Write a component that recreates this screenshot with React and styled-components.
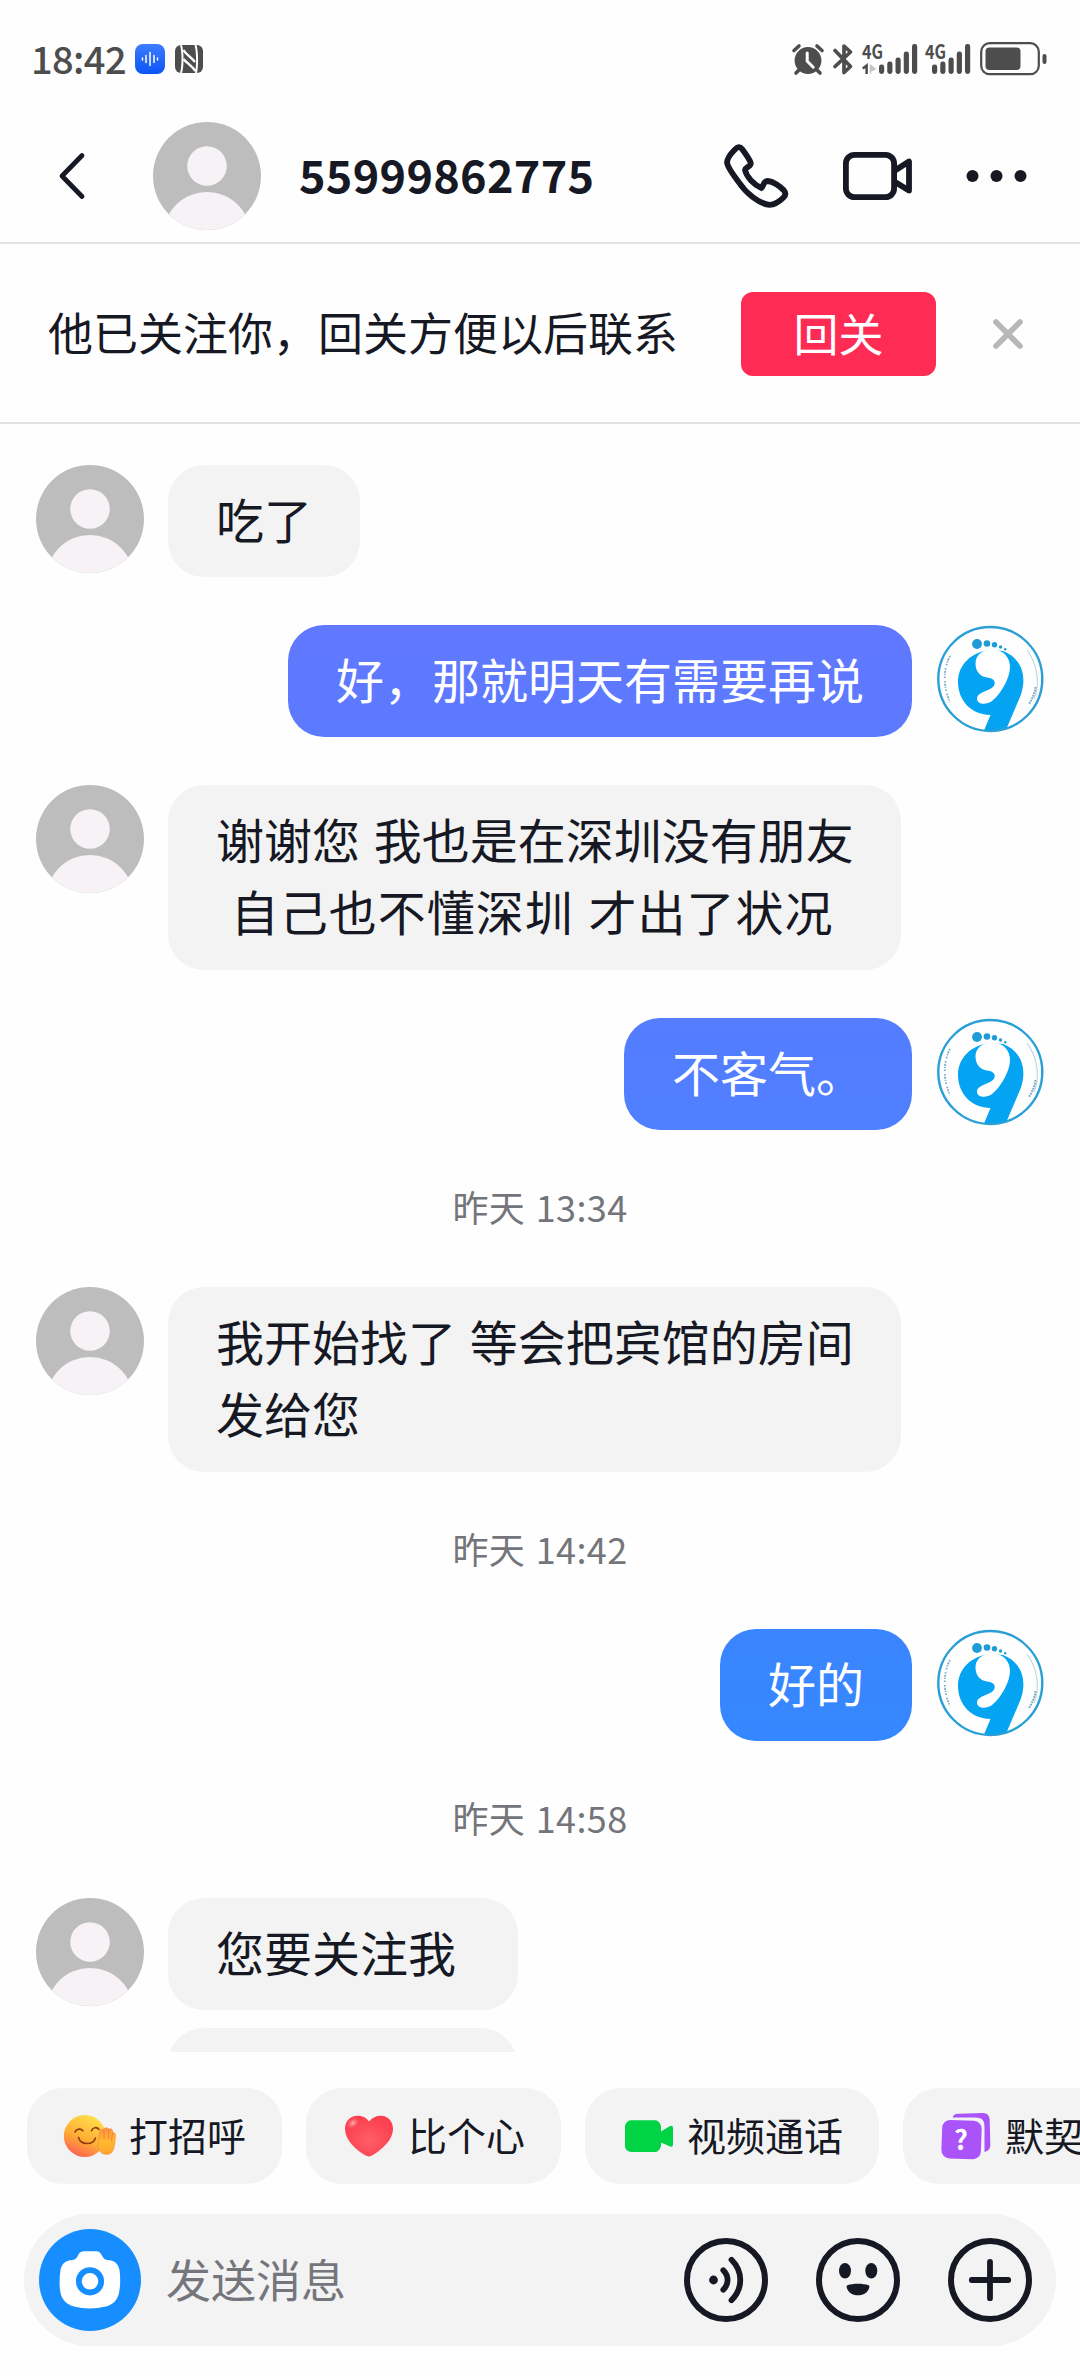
import React from "react";
import styled, { createGlobalStyle } from "styled-components";

const INK = "#161823";
const STATUS = "#4d4d4d";

const GlobalStyle = createGlobalStyle`
  html, body { margin: 0; padding: 0; background: #fefefe; }
  body { overflow: hidden; }
  * { box-sizing: border-box; }
`;

const Screen = styled.main`
  display: flex;
  flex-direction: column;
  width: 1080px;
  height: 2376px;
  overflow: hidden;
  background: #fefefe;
  color: ${INK};
  font-family: "Noto Sans CJK SC", "Noto Sans", sans-serif;
  svg { display: block; flex: none; overflow: visible; }
`;

/* ---------- status bar ---------- */
const StatusBar = styled.div`
  display: flex;
  align-items: center;
  height: 110px;
  padding: 8px 33px 0 31px;
  color: ${STATUS};
`;
const Clock = styled.span`
  width: 104px;
  padding-bottom: 2px;
  font-size: 38px;
  font-weight: 500;
  line-height: 40px;
  letter-spacing: -0.6px;
  white-space: nowrap;
`;
const StatusLeft = styled.div`
  display: flex;
  align-items: center;
  gap: 10px;
  margin-top: -1px;
`;
const StatusRight = styled.div`
  display: flex;
  align-items: center;
  gap: 8.7px;
  margin-left: auto;
`;

/* ---------- header ---------- */
const Header = styled.header`
  display: flex;
  align-items: center;
  height: 134px;
  border-bottom: 2px solid #e2e2e3;
  padding: 0 53px 0 57px;
`;
const HeaderAvatar = styled.div`
  margin: 0 38px 0 66px;
`;
const Title = styled.h1`
  margin: 0;
  flex: 1;
  padding-bottom: 4px;
  font-size: 45px;
  line-height: 60px;
  font-weight: 700;
  letter-spacing: 0.3px;
`;
const HeaderActions = styled.div`
  display: flex;
  align-items: center;
  gap: 53.5px;
`;

/* ---------- follow bar ---------- */
const FollowBar = styled.section`
  display: flex;
  align-items: center;
  height: 180px;
  border-bottom: 2px solid #e2e2e3;
  padding: 2px 55px 0 48px;
`;
const FollowText = styled.p`
  margin: 0;
  flex: 1;
  padding-bottom: 4px;
  font-size: 45px;
  line-height: 60px;
  white-space: nowrap;
`;
const FollowButton = styled.button`
  width: 195px;
  height: 84px;
  margin: 0 55px 0 0;
  padding: 0 0 4px;
  border: 0;
  border-radius: 12px;
  background: #fe2c55;
  color: #fff;
  font: inherit;
  font-size: 45px;
`;

/* ---------- messages ---------- */
const Thread = styled.section`
  display: flex;
  flex-direction: column;
  height: 1628px;
  padding: 41px 36px 0;
  overflow: hidden;
`;
const Row = styled.div`
  display: flex;
  flex: none;
  flex-direction: ${(p) => (p.$mine ? "row-reverse" : "row")};
  align-items: flex-start;
  gap: 24px;
  padding-left: ${(p) => (p.$follow ? "132px" : "0")};
  margin-bottom: ${(p) => p.$after ?? 48}px;
`;
const Bubble = styled.div`
  min-height: ${(p) => (p.$wide ? "185px" : "112px")};
  padding: 17px 48px 20px;
  border-radius: 36px;
  background: ${(p) => p.$fill || "#f3f3f4"};
  color: ${(p) => (p.$fill ? "#fff" : INK)};
  font-size: 48px;
  line-height: 72px;
  word-spacing: 3px;
  white-space: pre;
  ${(p) => (p.$wide ? "width: 733px;" : "")}
`;
const Line = styled.div`
  letter-spacing: ${(p) => p.$track || 0}px;
`;
const Stamp = styled.time`
  flex: none;
  height: 157px;
  line-height: 153px;
  text-align: center;
  font-size: 36px;
  letter-spacing: 0.4px;
  word-spacing: 2px;
  color: #74757b;
`;

/* ---------- quick actions ---------- */
const Chips = styled.nav`
  display: flex;
  gap: 24px;
  margin-top: 36px;
  padding-left: 27px;
`;
const Chip = styled.div`
  display: flex;
  flex: none;
  align-items: center;
  gap: 12px;
  height: 96px;
  padding: 0 36px;
  border-radius: 36px;
  background: #f3f3f4;
  font-size: 39px;
  line-height: 58px;
  white-space: nowrap;
`;
const ChipLabel = styled.span`
  padding-bottom: 5px;
`;

/* ---------- composer ---------- */
const Composer = styled.footer`
  display: flex;
  align-items: center;
  width: 1032px;
  height: 132px;
  margin: 30px 0 0 24px;
  padding: 0 24px 0 15px;
  border-radius: 66px;
  background: #f3f3f4;
`;
const Placeholder = styled.span`
  flex: 1;
  padding: 0 0 3px 25px;
  font-size: 45px;
  line-height: 60px;
  color: #75767c;
`;
const ComposerTools = styled.div`
  display: flex;
  gap: 48px;
`;

/* ---------- drawings ---------- */
const VoiceAppIcon = () => (
  <svg width="30" height="30" viewBox="0 0 30 30">
    <defs>
      <linearGradient id="voiceApp" x1="0" y1="0" x2="0" y2="1">
        <stop offset="0" stopColor="#3f7dff" />
        <stop offset="1" stopColor="#0a55f5" />
      </linearGradient>
    </defs>
    <rect width="30" height="30" rx="8" fill="url(#voiceApp)" />
    <path d="M7.5 14v2M11 11.5v7M15 8.5v13M19 11.5v7M22.5 14v2" stroke="#fff" strokeWidth="1.5" strokeLinecap="round" />
  </svg>
);

const NfcIcon = () => (
  <svg width="28" height="28" viewBox="0 0 28 28">
    <rect width="28" height="28" rx="6" fill={STATUS} />
    <path d="M6 0C8 7 8 21 6 28M20.500 0C22.500 7 22.500 21 21 28" stroke="#fefefe" strokeWidth="2" fill="none" />
    <path d="M8.500 5C11 9.500 16 12 20 17M8.500 14C11 17.500 16 20 20.500 26" stroke="#fefefe" strokeWidth="2.400" fill="none" />
  </svg>
);

const AlarmIcon = () => (
  <svg width="32" height="32" viewBox="0 0 32 32">
    <circle cx="16" cy="17.5" r="13.4" fill={STATUS} />
    <path d="M2 7.5 7 3M30 7.5 25 3M7 27l-3 3M25 27l3 3" stroke={STATUS} strokeWidth="3.6" strokeLinecap="round" />
    <path d="M15.2 10v8.2l6 6" stroke="#fefefe" strokeWidth="3" fill="none" strokeLinecap="round" />
  </svg>
);

const BluetoothIcon = () => (
  <svg width="20" height="32" viewBox="0 0 20 32">
    <path d="M2 7.5 17.5 23.5 11 29.5V3L17.5 9 2 23.5" stroke={STATUS} strokeWidth="3.7" fill="none" strokeLinecap="round" strokeLinejoin="round" />
  </svg>
);

const BARS = [9.5, 12.5, 16.5, 22.5, 30];
const SignalIcon = ({ width, first, slot }) => (
  <svg width={width} height="32" viewBox={`0 0 ${width} 32`}>
    <text x="0" y="15.500" textLength="21" lengthAdjust="spacingAndGlyphs" fontFamily="Noto Sans CJK SC, sans-serif" fontSize="19.500" fontWeight="700" fill={STATUS}>4G</text>
    {slot && (
      <>
        <path d="M0.800 25.500l3.800-3V31" stroke={STATUS} strokeWidth="2.500" fill="none" />
        <path d="M8.500 21.500v9M9.500 23l3.500 3-3.500 1.500z" stroke="#c4c4c4" strokeWidth="1.500" fill="#c4c4c4" />
      </>
    )}
    {BARS.map((h, i) => (
      <rect key={h} x={first + i * 8.25} y={31 - h} width="5.200" height={h} rx="2.400" fill={STATUS} />
    ))}
  </svg>
);

const BatteryIcon = () => (
  <svg width="67" height="34" viewBox="0 0 67 34">
    <rect x="1.200" y="1.200" width="57.600" height="31" rx="8.500" fill="none" stroke={STATUS} strokeWidth="2.200" />
    <rect x="5.500" y="5.500" width="35" height="22.500" rx="4" fill={STATUS} />
    <rect x="62.500" y="12" width="4" height="10" rx="2" fill={STATUS} />
  </svg>
);

const BackIcon = () => (
  <svg width="30" height="48" viewBox="0 0 30 48">
    <path d="M25 3.500 5 24l20 20.500" fill="none" stroke={INK} strokeWidth="4.800" strokeLinecap="round" strokeLinejoin="round" />
  </svg>
);

const PhoneIcon = () => (
  <svg width="65" height="64" viewBox="0 0 65 64">
    <path
      d="M11 5.500C13.500 2.500 16 2.300 18 5C21 9 24.500 13.500 26.600 18.500C27.800 22.500 22 22.500 21 26C22.500 33 30 41 37.500 44C39.500 43 39 37 43.500 37C49 37.500 56 42 60 46.500C62 49 61.500 51.500 59.500 53.500C56 57 51 60.800 45.500 60.800C35 60 22 49 15 38.500C8.500 30 3.500 23 3 18.500C3.300 13 8 8.500 11 5.500Z"
      fill="none" stroke={INK} strokeWidth="5.800" strokeLinejoin="round"
    />
  </svg>
);

const VideoIcon = () => (
  <svg width="70" height="48" viewBox="0 0 70 48">
    <rect x="2.900" y="2.900" width="48.200" height="42.200" rx="8.500" fill="none" stroke={INK} strokeWidth="5.800" />
    <path d="M52 18.500 66 9.500v29L52 30" fill="none" stroke={INK} strokeWidth="5.800" strokeLinejoin="round" />
  </svg>
);

const MoreIcon = () => (
  <svg width="61" height="14" viewBox="0 0 61 14">
    {[6.5, 30.5, 54.5].map((x) => <circle key={x} cx={x} cy="7" r="6" fill={INK} />)}
  </svg>
);

const CloseIcon = () => (
  <svg width="34" height="34" viewBox="0 0 34 34">
    <path d="M5 5 29 29M29 5 5 29" stroke="#b7b7b8" strokeWidth="5.600" strokeLinecap="round" />
  </svg>
);

const UserAvatar = () => (
  <svg width="108" height="108" viewBox="0 0 108 108">
    <defs>
      <clipPath id="round"><circle cx="54" cy="54" r="54" /></clipPath>
    </defs>
    <g clipPath="url(#round)">
      <rect width="108" height="108" fill="#bdbdbd" />
      <circle cx="54" cy="44" r="19.800" fill="#f6f2f6" />
      <circle cx="54" cy="113.600" r="43.600" fill="#f6f2f6" />
    </g>
  </svg>
);

const LogoAvatar = () => (
  <svg width="108" height="108" viewBox="0 0 108 108">
    <path d="M54 25C35 27 22 40 22 57C22 76 36 90 54.500 90L48 105.500Q60 107.500 70.500 103.500L84 72C91 55 88 34 67 26Z" fill="#04a4f3" />
    <path d="M55 24.500C45 25 39.500 31 39.500 38.500C39.500 47 45 52 51 52.500C60 53 61 60 55 63.500C50 66.500 41 68 41 73.500C41 79.500 50 80.500 56 76C66 68 74 52 74 42C74 33 68 24 55 24.500Z" fill="#fff" />
    <g fill="#1f9cd8">
      <circle cx="41" cy="19" r="4.900" />
      <circle cx="51" cy="18.500" r="3.300" />
      <circle cx="58.500" cy="19.700" r="2.700" />
      <circle cx="64.500" cy="22" r="1.700" />
      <circle cx="69.200" cy="24.300" r="1.200" />
    </g>
    <path d="M14 31C7 44 7 62 14 77" fill="none" stroke="#7fabc2" strokeWidth="1.800" strokeDasharray="1.500 1.300 2 1 1.200 1.400 1.500 3" />
    <path d="M91 25C102 40 104 60 98 74" fill="none" stroke="#9fc2d4" strokeWidth="0.800" />
    <path d="M99.500 62C99 68 96 74 93 79" fill="none" stroke="#7fabc2" strokeWidth="2" strokeDasharray="1.800 0.900" />
    <circle cx="54.300" cy="54" r="52" fill="none" stroke="#2a9fd6" strokeWidth="2.400" />
  </svg>
);

const WaveEmoji = () => (
  <svg width="54" height="54" viewBox="0 0 54 54">
    <defs>
      <linearGradient id="face" x1="0.700" y1="0" x2="0.250" y2="1">
        <stop offset="0" stopColor="#ffe14a" />
        <stop offset="0.550" stopColor="#ffae35" />
        <stop offset="1" stopColor="#fb5d55" />
      </linearGradient>
      <linearGradient id="hand" x1="0.300" y1="0" x2="0.400" y2="1">
        <stop offset="0" stopColor="#ff8f45" />
        <stop offset="0.500" stopColor="#ffb92e" />
        <stop offset="1" stopColor="#ffa62c" />
      </linearGradient>
    </defs>
    <circle cx="21.800" cy="27" r="21" fill="url(#face)" />
    <path d="M12 23C13.500 19.500 18 19.300 19.800 21.800M28.500 21.800C29.500 18.300 34 17.500 36 20.500M15.500 28.500C18 36.500 30 36.500 32.500 29" fill="none" stroke="#8a3d10" strokeWidth="1.600" strokeLinecap="round" />
    <path d="M36.500 23C37.500 19.500 40 21 41 20C43 17.500 45 19.500 46.500 20C48.500 19 49.500 21 50 23.500C53 23.500 52.800 27 52.300 29.500C51.500 36 51.500 45.500 43.500 45.500C36.500 45 34.800 40 35.500 35C35.800 30 35.800 26.500 36.500 23Z" fill="url(#hand)" stroke="#f98a3c" strokeWidth="0.600" />
    <path d="M41 21v8.500M45.500 20.500v9M49.500 24l-1 7" stroke="#f98038" strokeWidth="1.100" strokeLinecap="round" />
  </svg>
);

const HeartIcon = () => (
  <svg width="54" height="54" viewBox="0 0 54 54">
    <defs>
      <radialGradient id="heart" cx="0.500" cy="0.600" r="0.600">
        <stop offset="0" stopColor="#ff5f6a" />
        <stop offset="0.600" stopColor="#fd4a57" />
        <stop offset="1" stopColor="#fb3f50" />
      </radialGradient>
      <radialGradient id="shine">
        <stop offset="0" stopColor="#ffb9b9" />
        <stop offset="1" stopColor="#ff6a70" stopOpacity="0" />
      </radialGradient>
    </defs>
    <path d="M27 12.500C24 8 20 6.700 15.500 6.700C8 6.700 3 12.500 3 20C3 31 14 41 23 46.300Q27 48.500 30.500 46.300C40 40.500 51 31 51 20C51 12.500 46 6.700 39 6.700C34 6.700 30 8.500 27 12.500Z" fill="url(#heart)" />
    <ellipse cx="11" cy="14" rx="7" ry="5" fill="url(#shine)" transform="rotate(-40 11 14)" />
  </svg>
);

const GreenVideoIcon = () => (
  <svg width="54" height="54" viewBox="0 0 54 54">
    <path d="M10 11.300H34Q38 11.300 40 17V22.500L48.500 17.300Q52 15.500 52 19V35.500Q52 39 48.500 37.300L40 33.500V37Q38 43 34 43H10Q4 42 4 37V17Q5 12 10 11.300Z" fill="#00d344" />
  </svg>
);

const QuizIcon = () => (
  <svg width="54" height="54" viewBox="0 0 54 54">
    <path d="M13.500 8.500C15 5 17 5 20 4.800L43 4C48.500 4 50.500 6.500 50.700 11L51.300 36C51.300 40 49 42 45.500 43L45.500 18C45.500 11 43 8.800 37 8.500Z" fill="#a953f8" />
    <rect x="2.800" y="11.300" width="39.500" height="38.500" rx="8" fill="#a953f8" transform="rotate(2 22 30)" />
    <text x="22" y="40.500" textAnchor="middle" fontFamily="Noto Sans CJK SC, sans-serif" fontWeight="700" fontSize="27" fill="#fff">?</text>
  </svg>
);

const CameraButton = () => (
  <svg width="102" height="102" viewBox="0 0 102 102">
    <circle cx="51" cy="51" r="51" fill="#168eff" />
    <path d="M45 22.300H57C61 22.300 62 25 63.500 27.500C65 30.500 67 31 71 31.300C77 32.500 79.500 36 80.500 41C81.500 48 81.500 57 80 64C78.500 71 74 75.500 67 77.500C56 80 45 80 35 77.500C28 75.500 23 71 21.500 64C20 56 20.500 48 21.500 41C22.500 35.500 26 32 31 31.300C35 31 36.500 30.500 38.500 27.500C40 24.500 41 22.500 45 22.300Z" fill="#fff" />
    <circle cx="51" cy="52.300" r="11.200" fill="none" stroke="#168eff" strokeWidth="5.800" />
  </svg>
);

const ToolRing = ({ children }) => (
  <svg width="84" height="84" viewBox="0 0 84 84">
    <circle cx="42" cy="42" r="39" fill="none" stroke={INK} strokeWidth="6" />
    {children}
  </svg>
);

const VoiceTool = () => (
  <ToolRing>
    <circle cx="29.500" cy="42" r="4.400" fill={INK} />
    <path d="M39.300 32.300C45 38 45 46 39.300 51.700M47.500 21.800C59.200 33.500 59.200 50.500 47.500 62.200" fill="none" stroke={INK} strokeWidth="5.800" strokeLinecap="round" />
  </ToolRing>
);

const EmojiTool = () => (
  <ToolRing>
    <ellipse cx="29" cy="32.700" rx="6" ry="7.700" fill={INK} />
    <ellipse cx="55.300" cy="32.700" rx="6" ry="7.700" fill={INK} />
    <path d="M31.500 47.300C37 45.300 47 45.300 52.500 47.300Q53.800 47.800 53.300 49.500C52 54.500 47.500 57.300 42 57.300C36.500 57.300 32 54.500 30.700 49.500Q30.200 47.800 31.500 47.300Z" fill={INK} />
  </ToolRing>
);

const PlusTool = () => (
  <ToolRing>
    <path d="M42 23.800V60.200M23.800 42H60.200" stroke={INK} strokeWidth="5.800" strokeLinecap="round" />
  </ToolRing>
);

const THREAD = [
  { from: "them", lines: ["吃了"] },
  { from: "me", lines: ["好，那就明天有需要再说"], fill: "linear-gradient(#6078ff, #5c7aff)" },
  { from: "them", lines: ["谢谢您 我也是在深圳没有朋友", " 自己也不懂深圳 才出了状况"], tracks: [0, 1], wide: true },
  { from: "me", lines: ["不客气。"], fill: "linear-gradient(#547cff, #4f80ff)", after: 0 },
  { stamp: "昨天 13:34" },
  { from: "them", lines: ["我开始找了 等会把宾馆的房间", "发给您"], wide: true, after: 0 },
  { stamp: "昨天 14:42" },
  { from: "me", lines: ["好的"], fill: "linear-gradient(#3b85ff, #3587ff)", after: 0 },
  { stamp: "昨天 14:58" },
  { from: "them", lines: ["您要关注我 "], after: 18 },
];

const CHIPS = [
  { label: "打招呼", Icon: WaveEmoji },
  { label: "比个心", Icon: HeartIcon },
  { label: "视频通话", Icon: GreenVideoIcon },
  { label: "默契", Icon: QuizIcon },
];

const FollowUpBubble = styled(Bubble)`
  width: 349px;
`;

function Message({ from, lines, tracks = [], fill, wide, after }) {
  const mine = from === "me";
  return (
    <Row $mine={mine} $after={after}>
      {mine ? <LogoAvatar /> : <UserAvatar />}
      <Bubble $fill={fill} $wide={wide}>
        {lines.map((line, i) => <Line key={line} $track={tracks[i]}>{line}</Line>)}
      </Bubble>
    </Row>
  );
}

export default function App() {
  return (
    <Screen>
      <GlobalStyle />
      <StatusBar>
        <Clock>18:42</Clock>
        <StatusLeft>
          <VoiceAppIcon />
          <NfcIcon />
        </StatusLeft>
        <StatusRight>
          <AlarmIcon />
          <BluetoothIcon />
          <SignalIcon width={55} first={17} slot />
          <SignalIcon width={46} first={7} />
          <BatteryIcon />
        </StatusRight>
      </StatusBar>

      <Header>
        <BackIcon />
        <HeaderAvatar><UserAvatar /></HeaderAvatar>
        <Title>55999862775</Title>
        <HeaderActions>
          <PhoneIcon />
          <VideoIcon />
          <MoreIcon />
        </HeaderActions>
      </Header>

      <FollowBar>
        <FollowText>他已关注你，回关方便以后联系</FollowText>
        <FollowButton>回关</FollowButton>
        <CloseIcon />
      </FollowBar>

      <Thread>
        {THREAD.map((item, i) =>
          item.stamp ? <Stamp key={i}>{item.stamp}</Stamp> : <Message key={i} {...item} />
        )}
        <Row $follow>
          <FollowUpBubble />
        </Row>
      </Thread>

      <Chips>
        {CHIPS.map(({ label, Icon }) => (
          <Chip key={label}>
            <Icon />
            <ChipLabel>{label}</ChipLabel>
          </Chip>
        ))}
      </Chips>

      <Composer>
        <CameraButton />
        <Placeholder>发送消息</Placeholder>
        <ComposerTools>
          <VoiceTool />
          <EmojiTool />
          <PlusTool />
        </ComposerTools>
      </Composer>
    </Screen>
  );
}
